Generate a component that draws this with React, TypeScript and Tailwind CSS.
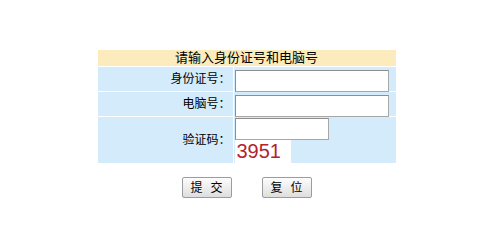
const cjk = "font-['Liberation_Sans','Noto_Sans_CJK_SC',sans-serif]";

function Field({ width }: { width: string }) {
    return (
        <input
            type="text"
            className={`${width} h-[22px] bg-white border border-[#a7a7a7] border-t-[#8e8e8e] border-l-[#8e8e8e] outline-none px-1 text-[12px]`}
        />
    );
}

function Btn({ chars }: { chars: [string, string] }) {
    return (
        <button
            type="button"
            className="w-[50px] h-[21px] rounded-[2px] border border-[#9c9c9c] bg-gradient-to-b from-[#fdfdfd] to-[#dedede] text-[12px] text-black leading-none flex items-center justify-center gap-[8px]"
        >
            <span>{chars[0]}</span>
            <span>{chars[1]}</span>
        </button>
    );
}

export default function App() {
    return (
        <div className={`w-[493px] h-[238px] bg-white ${cjk} text-black`}>
            <div className="pt-[50px] flex flex-col items-center">
                {/* form table */}
                <div className="w-[298px] grid grid-cols-[135px_162px] gap-px">
                    <div className="col-span-2 h-[16px] bg-[#fcebbd] text-[13px] leading-[16px] text-center">
                        请输入身份证号和电脑号
                    </div>

                    <div className="h-[24px] bg-[#d4ebfc] text-[12px] flex items-center justify-end pr-[2px]">身份证号：</div>
                    <div className="h-[24px] bg-[#d4ebfc] pl-px pt-px">
                        <Field width="w-[154px]" />
                    </div>

                    <div className="h-[24px] bg-[#d4ebfc] text-[12px] flex items-center justify-end pr-[2px]">电脑号：</div>
                    <div className="h-[24px] bg-[#d4ebfc] pl-px pt-px">
                        <Field width="w-[154px]" />
                    </div>

                    <div className="h-[46px] bg-[#d4ebfc] text-[12px] flex items-center justify-end pr-[2px]">验证码：</div>
                    <div className="h-[46px] bg-[#d4ebfc] pl-px pt-px flex flex-col items-start">
                        <Field width="w-[94px]" />
                        <div className="w-[56px] h-[23px] bg-white font-['Liberation_Sans',sans-serif] text-[20px] leading-[23px] text-[#b3232b] pl-[2px]">
                            3951
                        </div>
                    </div>
                </div>

                {/* buttons */}
                <div className="mt-[14px] flex gap-[30px]">
                    <Btn chars={['提', '交']} />
                    <Btn chars={['复', '位']} />
                </div>
            </div>
        </div>
    );
}
